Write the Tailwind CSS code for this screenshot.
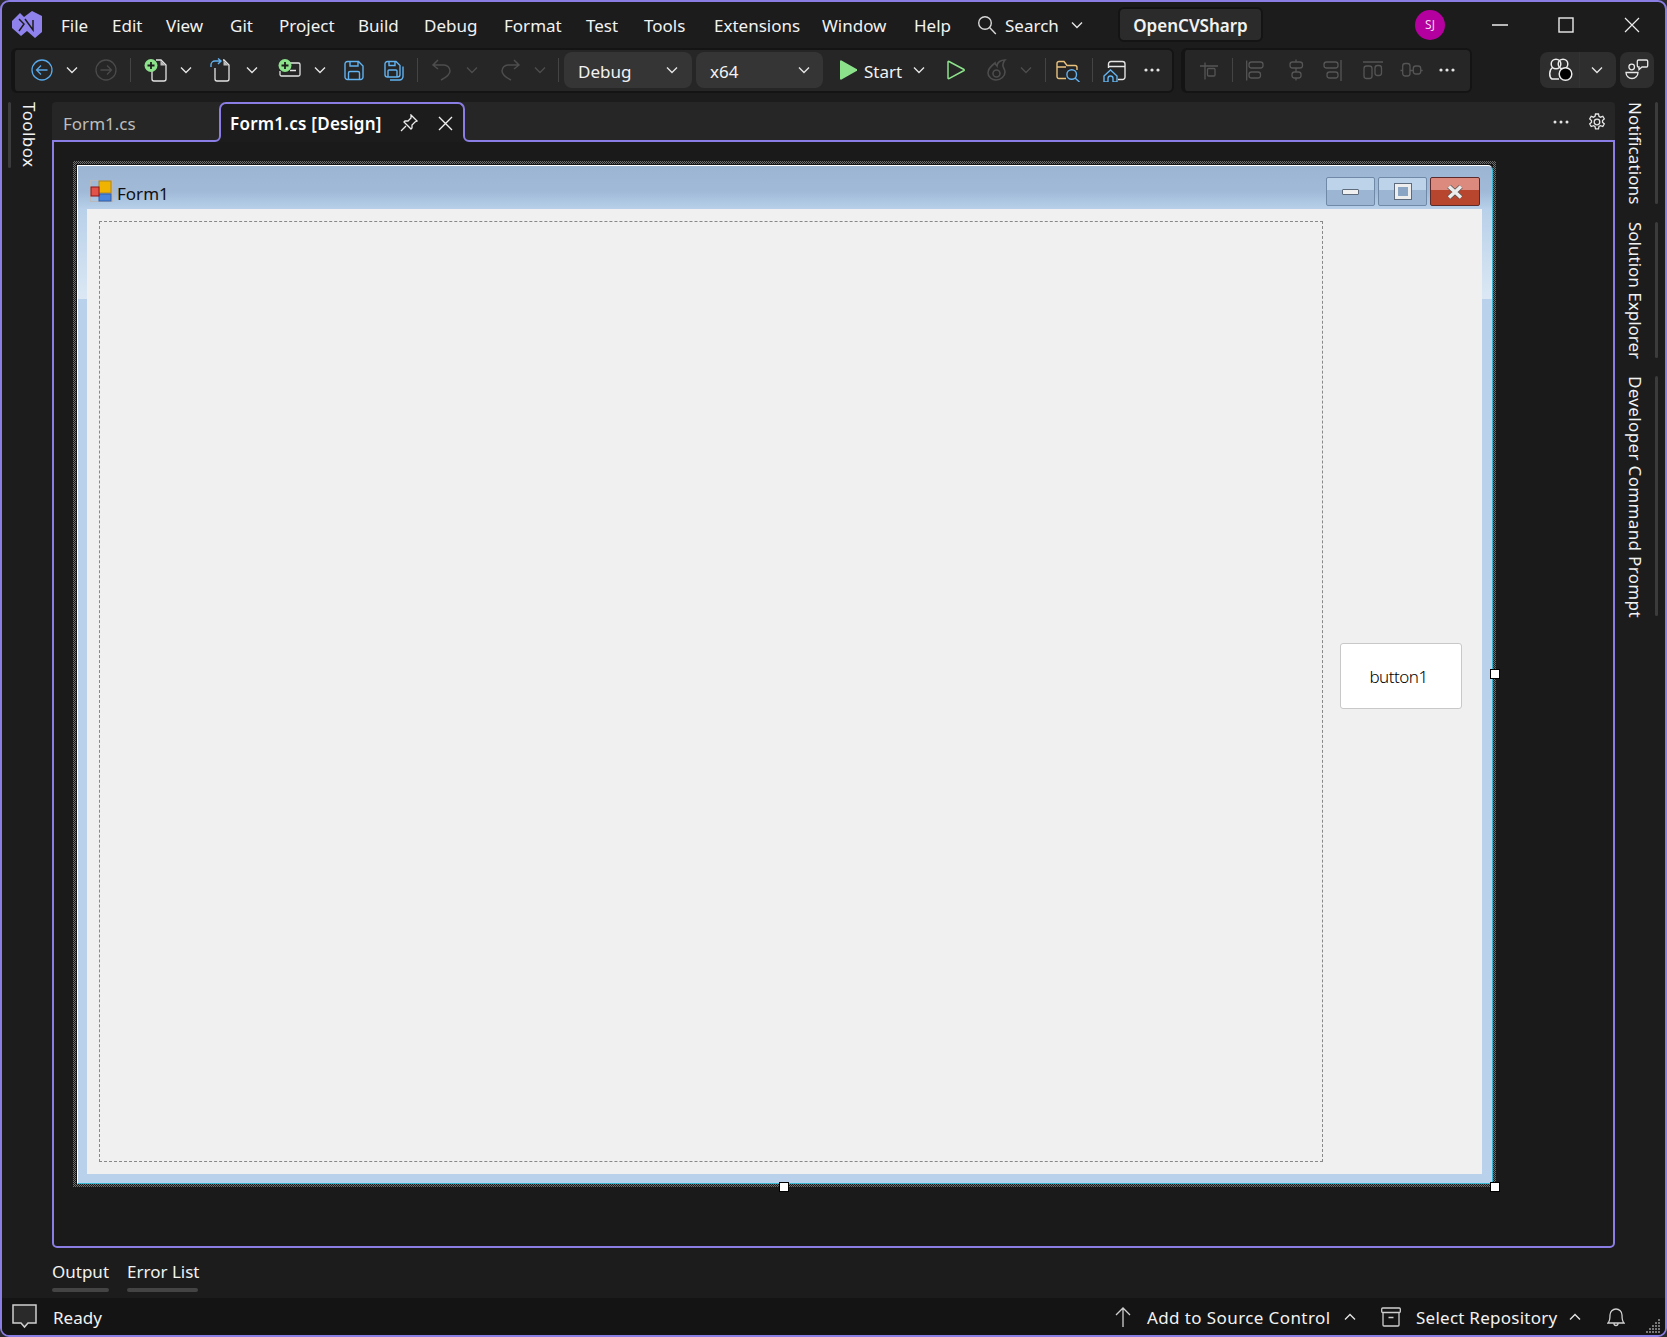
<!DOCTYPE html>
<html lang="en">
<head>
    <meta charset="UTF-8">
    <title>OpenCVSharp - Form1.cs [Design]</title>
    <script src="https://cdn.jsdelivr.net/npm/@tailwindcss/browser@4"></script>
</head>
<body class="bg-[#2a2a2a]">
<div class="w-[1667px] h-[1337px] flex flex-col border-2 border-[#8a7de3] rounded-[9px] overflow-hidden bg-[#1c1c1c] text-[#f2f2f2] text-[17px] leading-none whitespace-nowrap [font-family:'Noto_Sans',sans-serif]">

    <!-- menu bar -->
    <div class="h-[45px] shrink-0 flex items-center">
        <svg class="w-[30px] h-[27px] ml-[10px] shrink-0" viewBox="0 0 30 27">
            <path d="M0 10l8-8 4 4 8-6 10 5v16l-7 6-8-7-6 5-9-8z" fill="#8f82ec"/>
            <path d="M7 8l5 5-5 7M13 8l8 11V9" fill="none" stroke="#1c1c1c" stroke-width="1.500"/>
        </svg>
        <nav class="flex ml-[19px] pt-[2px]">
            <span class="w-[51px]">File</span>
            <span class="w-[54px]">Edit</span>
            <span class="w-[64px]">View</span>
            <span class="w-[49px]">Git</span>
            <span class="w-[79px]">Project</span>
            <span class="w-[66px]">Build</span>
            <span class="w-[80px]">Debug</span>
            <span class="w-[82px]">Format</span>
            <span class="w-[58px]">Test</span>
            <span class="w-[70px]">Tools</span>
            <span class="w-[108px]">Extensions</span>
            <span class="w-[92px]">Window</span>
            <span class="w-[63px]">Help</span>
        </nav>
        <svg class="w-[20px] h-[20px] shrink-0" viewBox="0 0 20 20" fill="none" stroke="#d8d8d8" stroke-width="1.4"><circle cx="8" cy="8" r="6.3"/><path d="M12.6 12.6l6.2 6.4"/></svg>
        <span class="ml-[8px] w-[66px] pt-[2px]">Search</span>
        <svg class="w-[12px] h-[12px] shrink-0" viewBox="0 0 12 12" fill="none" stroke="#e4e4e4" stroke-width="1.4"><path d="M1 3.5l5 5 5-5"/></svg>
        <div class="ml-[35px] w-[145px] h-[35px] pt-[2px] flex items-center justify-center rounded-md bg-[#2b2b2b] border-2 border-[#141414] font-semibold">OpenCVSharp</div>
        <div class="ml-[152px] w-[30px] h-[30px] rounded-full bg-[#b4009e] flex items-center justify-center text-[12px] text-[#f3d9ef]">SJ</div>
        <svg class="ml-[47px] w-[16px] h-[16px] shrink-0" viewBox="0 0 16 16" stroke="#ececec" stroke-width="1.4"><path d="M0 8h16"/></svg>
        <svg class="ml-[50px] w-[16px] h-[16px] shrink-0" viewBox="0 0 16 16" fill="none" stroke="#ececec" stroke-width="1.4"><rect x="1" y="1" width="14" height="14"/></svg>
        <svg class="ml-[50px] w-[16px] h-[16px] shrink-0" viewBox="0 0 16 16" stroke="#ececec" stroke-width="1.2"><path d="M1 1l14 14M15 1L1 15"/></svg>
    </div>

    <!-- toolbars -->
    <div class="h-[46px] shrink-0 flex items-center pl-[9px] pr-[11px]">
        <div class="w-[1163px] h-[45px] flex items-center pl-[15px] bg-[#262626] rounded-md border-2 border-l-4 border-[#141414]">
            <svg class="w-[24px] h-[24px] shrink-0" viewBox="0 0 24 24" fill="none" stroke="#58a9ea" stroke-width="1.3"><circle cx="12" cy="12" r="10"/><path d="M17.5 12h-11M11 7.5L6.5 12l4.5 4.5"/></svg>
            <svg class="ml-[12px] w-[12px] h-[12px] shrink-0" viewBox="0 0 12 12" fill="none" stroke="#e4e4e4" stroke-width="1.4"><path d="M1 3.5l5 5 5-5"/></svg>
            <svg class="ml-[16px] w-[24px] h-[24px] shrink-0" viewBox="0 0 24 24" fill="none" stroke="#4a4a4a" stroke-width="1.3"><circle cx="12" cy="12" r="10"/><path d="M6.5 12h11M13 7.5l4.5 4.5-4.5 4.5"/></svg>
            <div class="ml-[12px] w-px h-[24px] bg-[#444]"></div>
            <!-- new item -->
            <svg class="ml-[13px] w-[24px] h-[24px] shrink-0" viewBox="0 0 24 24" fill="none"><path d="M16.500 2.500v5h5z" fill="#bdbdbd"/><path d="M12 2h5l5 5v14a2 2 0 0 1-2 2H10a2 2 0 0 1-2-2v-8" stroke="#e4e4e4" stroke-width="1.300"/><circle cx="7" cy="7.500" r="6.500" fill="#8be28b"/><path d="M7 4v7M3.500 7.500h7" stroke="#1c1c1c" stroke-width="1.800"/></svg>
            <svg class="ml-[12px] w-[12px] h-[12px] shrink-0" viewBox="0 0 12 12" fill="none" stroke="#e4e4e4" stroke-width="1.4"><path d="M1 3.5l5 5 5-5"/></svg>
            <!-- open -->
            <svg class="ml-[16px] w-[24px] h-[24px] shrink-0" viewBox="0 0 24 24" fill="none"><path d="M15.500 2.500v5h5z" fill="#bdbdbd"/><path d="M15 2h1l5 5v14a2 2 0 0 1-2 2H9a2 2 0 0 1-2-2V10" stroke="#e4e4e4" stroke-width="1.300"/><path d="M3 9V7a4 4 0 0 1 4-4h6M10 .5L13 3l-3 3" stroke="#62b2f0" stroke-width="1.400"/></svg>
            <svg class="ml-[14px] w-[12px] h-[12px] shrink-0" viewBox="0 0 12 12" fill="none" stroke="#e4e4e4" stroke-width="1.4"><path d="M1 3.500l5 5 5-5"/></svg>
            <!-- add -->
            <svg class="ml-[19px] w-[24px] h-[24px] shrink-0" viewBox="0 0 24 24" fill="none"><path d="M13 5h8.500a1.500 1.500 0 0 1 1.500 1.500v10a1.500 1.500 0 0 1-1.500 1.500h-17A1.500 1.500 0 0 1 3 16.500V13M13 12.500h6" stroke="#e4e4e4" stroke-width="1.300"/><circle cx="8" cy="7.500" r="6.500" fill="#8be28b"/><path d="M8 4v7M4.500 7.500h7" stroke="#1c1c1c" stroke-width="1.800"/></svg>
            <svg class="ml-[13px] w-[12px] h-[12px] shrink-0" viewBox="0 0 12 12" fill="none" stroke="#e4e4e4" stroke-width="1.4"><path d="M1 3.500l5 5 5-5"/></svg>
            <!-- save -->
            <svg class="ml-[16px] w-[24px] h-[24px] shrink-0" viewBox="0 0 24 24" fill="none" stroke="#62b2f0" stroke-width="1.400"><path d="M5.500 3.500h11L21 8v11a2.500 2.500 0 0 1-2.500 2.500h-13A2.500 2.500 0 0 1 3 19V6a2.500 2.500 0 0 1 2.500-2.500zM8 3.500v4.500h8V3.500M6.500 21.500V15a1.500 1.500 0 0 1 1.500-1.500h8a1.500 1.500 0 0 1 1.500 1.500v6.500"/></svg>
            <!-- save all -->
            <svg class="ml-[16px] w-[24px] h-[24px] shrink-0" viewBox="0 0 24 24" fill="none" stroke="#62b2f0" stroke-width="1.400"><path d="M5.500 3.500h8.500l4 4v9a2.500 2.500 0 0 1-2.500 2.500h-10A2.500 2.500 0 0 1 3 16.500V6a2.500 2.500 0 0 1 2.500-2.500zM7 3.500v4h6v-4M6 19v-6a1 1 0 0 1 1-1h7a1 1 0 0 1 1 1v6M21 8.500v10a3.500 3.500 0 0 1-3.500 3.500H8"/></svg>
            <div class="ml-[11px] w-px h-[24px] bg-[#444]"></div>
            <svg class="ml-[12px] w-[24px] h-[24px] shrink-0" viewBox="0 0 24 24" fill="none" stroke="#4d4d4d" stroke-width="1.500"><path d="M8 2L3 7l5 4M3 7h11a6 6 0 0 1 6 6c0 4-5 7-9 9"/></svg>
            <svg class="ml-[12px] w-[12px] h-[12px] shrink-0" viewBox="0 0 12 12" fill="none" stroke="#4d4d4d" stroke-width="1.4"><path d="M1 3.500l5 5 5-5"/></svg>
            <svg class="ml-[20px] w-[24px] h-[24px] shrink-0" viewBox="0 0 24 24" fill="none" stroke="#4d4d4d" stroke-width="1.500"><path d="M16 2l5 5-5 4M21 7H10a6 6 0 0 0-6 6c0 4 5 7 9 9"/></svg>
            <svg class="ml-[12px] w-[12px] h-[12px] shrink-0" viewBox="0 0 12 12" fill="none" stroke="#4d4d4d" stroke-width="1.4"><path d="M1 3.500l5 5 5-5"/></svg>
            <div class="ml-[12px] w-px h-[24px] bg-[#444]"></div>

            <div class="ml-[5px] w-[128px] h-[36px] rounded-lg bg-[#353535] flex items-center pl-[14px] pr-[14px]">
                <span class="flex-1 pt-[2px]">Debug</span>
                <svg class="w-[12px] h-[12px] shrink-0" viewBox="0 0 12 12" fill="none" stroke="#e4e4e4" stroke-width="1.4"><path d="M1 3.500l5 5 5-5"/></svg>
            </div>
            <div class="ml-[4px] w-[127px] h-[36px] rounded-lg bg-[#353535] flex items-center pl-[14px] pr-[13px]">
                <span class="flex-1 pt-[2px]">x64</span>
                <svg class="w-[12px] h-[12px] shrink-0" viewBox="0 0 12 12" fill="none" stroke="#e4e4e4" stroke-width="1.4"><path d="M1 3.500l5 5 5-5"/></svg>
            </div>

            <svg class="ml-[17px] w-[17px] h-[20px] shrink-0" viewBox="0 0 17 20" fill="#8be28b"><path d="M1.500 0.500L16.500 9a1 1 0 0 1 0 2L1.500 19.500A1 1 0 0 1 0 18.500V1.500a1 1 0 0 1 1.500-1z"/></svg>
            <span class="ml-[7px] w-[48px] pt-[2px]">Start</span>
            <svg class="ml-[1px] w-[12px] h-[12px] shrink-0" viewBox="0 0 12 12" fill="none" stroke="#e4e4e4" stroke-width="1.4"><path d="M1 3.500l5 5 5-5"/></svg>
            <svg class="ml-[19px] w-[24px] h-[24px] shrink-0" viewBox="0 0 24 24" fill="none" stroke="#8be28b" stroke-width="1.500"><path d="M5 3.500l15 8a.6.6 0 0 1 0 1l-15 8a.600.600 0 0 1-1-.5V4a.600.600 0 0 1 1-.5z"/></svg>
            <svg class="ml-[17px] w-[24px] h-[24px] shrink-0" viewBox="0 0 24 24" fill="none" stroke="#4d4d4d" stroke-width="1.600"><path d="M20 2c-4 0-8 2-8 6-1-1-2-2-2-3-4 3-7 6-7 10 0 4 4 7 8 7 5 0 9-4 9-8 0-3-3-5-2-8 .5-2 1-3 2-4z"/><circle cx="11.500" cy="15.500" r="3.500"/></svg>
            <svg class="ml-[11px] w-[12px] h-[12px] shrink-0" viewBox="0 0 12 12" fill="none" stroke="#4d4d4d" stroke-width="1.4"><path d="M1 3.500l5 5 5-5"/></svg>
            <div class="ml-[13px] w-px h-[24px] bg-[#444]"></div>
            <!-- folder search -->
            <svg class="ml-[10px] w-[24px] h-[24px] shrink-0" viewBox="0 0 24 24" fill="none" stroke-width="1.400"><path d="M10 20.500H3A2 2 0 0 1 1 18.500V5.500A2 2 0 0 1 3 3.500h5l3 4h8a2 2 0 0 1 2 2V12M1 9h9" stroke="#e9c27e"/><circle cx="15.700" cy="16.500" r="4.800" stroke="#62b2f0"/><path d="M19 20l4.500 4" stroke="#62b2f0"/></svg>
            <div class="ml-[12px] w-px h-[24px] bg-[#444]"></div>
            <!-- remote window -->
            <svg class="ml-[10px] w-[24px] h-[24px] shrink-0" viewBox="0 0 24 24" fill="none" stroke-width="1.400"><path d="M5.500 10V6A2.500 2.500 0 0 1 8 3.500h11.500A2.500 2.500 0 0 1 22 6v13a2.500 2.500 0 0 1-2.500 2.500H15M5.500 8.500H22" stroke="#e4e4e4"/><path d="M1 18l6.500-6 6.500 6v6h-4v-3.500a2.500 2.500 0 0 0-5 0V24H1z" stroke="#62b2f0"/></svg>
            <svg class="ml-[13px] w-[24px] h-[24px] shrink-0" viewBox="0 0 24 24" fill="#e4e4e4"><circle cx="6" cy="12" r="1.600"/><circle cx="12" cy="12" r="1.600"/><circle cx="18" cy="12" r="1.600"/></svg>
        </div>

        <div class="ml-[7px] w-[291px] h-[45px] flex items-center pl-[12px] bg-[#262626] rounded-md border-2 border-l-4 border-[#141414]">
            <svg class="w-[24px] h-[24px] shrink-0" viewBox="0 0 24 24" fill="none" stroke="#555" stroke-width="1.300"><path d="M3 8h18M8 4.500v17"/><rect x="10.500" y="10.500" width="7.500" height="7.500" rx="1"/></svg>
            <div class="ml-[11px] w-px h-[24px] bg-[#444]"></div>
            <svg class="ml-[10px] w-[24px] h-[24px] shrink-0" viewBox="0 0 24 24" fill="none" stroke="#555" stroke-width="1.300"><path d="M3.700 2.500v20"/><rect x="6" y="4" width="14" height="6" rx="2.500"/><rect x="6" y="14" width="11.500" height="6" rx="2.500"/></svg>
            <svg class="ml-[17px] w-[24px] h-[24px] shrink-0" viewBox="0 0 24 24" fill="none" stroke="#555" stroke-width="1.300"><path d="M12 1.500V4M12 10v4M12 20v2.500"/><rect x="6" y="4" width="12.500" height="6" rx="2.500"/><rect x="8" y="14" width="9" height="6" rx="2.500"/></svg>
            <svg class="ml-[13px] w-[24px] h-[24px] shrink-0" viewBox="0 0 24 24" fill="none" stroke="#555" stroke-width="1.300"><path d="M20 2v21"/><rect x="3" y="4" width="14" height="6" rx="2.500"/><rect x="6" y="14" width="11" height="6" rx="2.500"/></svg>
            <svg class="ml-[16px] w-[24px] h-[24px] shrink-0" viewBox="0 0 24 24" fill="none" stroke="#555" stroke-width="1.300"><path d="M2 4h20"/><rect x="3" y="8" width="8" height="12.500" rx="2.500"/><rect x="14" y="7.500" width="6.500" height="10" rx="2.500"/></svg>
            <svg class="ml-[14px] w-[24px] h-[24px] shrink-0" viewBox="0 0 24 24" fill="none" stroke="#555" stroke-width="1.300"><path d="M1.500 12.500h2M11 12.500h3.300M21.700 12.500h2"/><rect x="3.700" y="5.500" width="7.300" height="12.500" rx="2.500"/><rect x="14.300" y="8" width="7.400" height="8" rx="2.500"/></svg>
            <svg class="ml-[12px] w-[24px] h-[24px] shrink-0" viewBox="0 0 24 24" fill="#e4e4e4"><circle cx="6" cy="12" r="1.600"/><circle cx="12" cy="12" r="1.600"/><circle cx="18" cy="12" r="1.600"/></svg>
        </div>

        <div class="ml-auto w-[76px] h-[36px] rounded-lg bg-[#2e2e2e] flex items-center">
            <svg class="ml-[8px] w-[26px] h-[26px] shrink-0" viewBox="0 0 26 26" fill="none" stroke="#ececec" stroke-width="1.500"><circle cx="8" cy="7" r="4.800"/><circle cx="15" cy="7" r="4.800"/><path d="M4.500 10.500C1 13 .8 20 4 22h7"/><circle cx="17.500" cy="17" r="6.300" fill="#000"/></svg>
            <div class="ml-[5px] w-px h-full bg-[#333]"></div>
            <svg class="ml-[11px] w-[12px] h-[12px] shrink-0" viewBox="0 0 12 12" fill="none" stroke="#e4e4e4" stroke-width="1.4"><path d="M1 3.500l5 5 5-5"/></svg>
        </div>
        <div class="ml-[4px] w-[34px] h-[36px] rounded-lg bg-[#2e2e2e] flex items-center justify-center">
            <svg class="w-[24px] h-[24px] shrink-0" viewBox="0 0 24 24" fill="none" stroke="#e8e8e8" stroke-width="1.300"><circle cx="6.700" cy="9" r="2.800"/><path d="M1 14.500h12a6 6 0 0 1-12 0z"/><path d="M13.500 2h8a1.200 1.200 0 0 1 1.200 1.200v4.600A1.200 1.200 0 0 1 21.500 9h-4.500l-3 2.500V9h-.5a1.200 1.200 0 0 1-1.200-1.200V3.200A1.200 1.200 0 0 1 13.500 2z"/></svg>
        </div>
    </div>

    <!-- main row -->
    <div class="h-[1146px] mt-[9px] shrink-0 flex">
        <!-- left rail -->
        <div class="w-[50px] shrink-0 flex pl-[6px] gap-[10px]">
            <div class="w-[3px] h-[66px] bg-[#3c3c3c] rounded-full"></div>
            <span class="[writing-mode:vertical-rl] h-[66px] tracking-[0.4px]">Toolbox</span>
        </div>

        <!-- document -->
        <div class="w-[1563px] shrink-0 flex flex-col">
            <div class="h-[38px] shrink-0 flex bg-[#262626] rounded-t-sm">
                <div class="w-[167px] h-[38px] flex items-center pl-[11px] pt-[4px] text-[#bdbdbd]">Form1.cs</div>
                <div class="relative z-10 w-[246px] h-[40px] flex items-center pl-[9px] bg-[#1c1c1c] border-2 border-b-0 border-[#8a7de3] rounded-t-[7px]">
                    <span class="w-[170px] font-semibold text-white tracking-[0.25px]">Form1.cs [Design]</span>
                    <svg class="w-[18px] h-[18px] shrink-0" viewBox="0 0 18 18" fill="none" stroke="#ececec" stroke-width="1.300"><path d="M11 1l6 6-2 1-3 3v3l-1 1-7-7 1-1h3l3-3zM6 12l-5 5"/></svg>
                    <svg class="ml-[20px] w-[15px] h-[15px] shrink-0" viewBox="0 0 15 15" stroke="#f0f0f0" stroke-width="1.400"><path d="M1 1l13 13M14 1L1 14"/></svg>
                    <!-- flared joins into the document border -->
                    <svg class="absolute bottom-0 left-[-6px] w-[6px] h-[6px]" viewBox="0 0 6 6"><path d="M6 0H5A5 5 0 0 1 0 5V6H6z" fill="#1c1c1c"/><path d="M5 0A5 5 0 0 1 0 5" fill="none" stroke="#8a7de3" stroke-width="2"/></svg>
                    <svg class="absolute bottom-0 right-[-6px] w-[6px] h-[6px]" viewBox="0 0 6 6"><path d="M0 0H1A5 5 0 0 0 6 5V6H0z" fill="#1c1c1c"/><path d="M1 0A5 5 0 0 0 6 5" fill="none" stroke="#8a7de3" stroke-width="2"/></svg>
                </div>
                <div class="ml-auto flex items-center pr-[9px] pt-[2px]">
                    <svg class="w-[24px] h-[24px] shrink-0" viewBox="0 0 24 24" fill="#e4e4e4"><circle cx="6" cy="12" r="1.500"/><circle cx="12" cy="12" r="1.500"/><circle cx="18" cy="12" r="1.500"/></svg>
                    <svg class="ml-[15px] w-[18px] h-[18px] shrink-0" viewBox="0 0 18 18" fill="none" stroke="#e4e4e4" stroke-width="1.300"><circle cx="9" cy="9" r="2.800"/><path d="M7.500 1h3l.5 2.400 1.500.8 2.300-.9 1.500 2.600-1.800 1.600v1.800l1.800 1.600-1.500 2.600-2.300-.9-1.500.8-.5 2.400h-3l-.5-2.400-1.500-.8-2.300.9-1.500-2.600 1.800-1.600V7.500L1.700 5.900l1.500-2.600 2.300.9 1.500-.8z"/></svg>
                </div>
            </div>

            <div class="flex-1 border-2 border-[#8a7de3] rounded-b-[5px] bg-[#1a1a1a] pl-[19px] pt-[19px]">
                <!-- designer selection frame -->
                <div class="relative w-[1423px] h-[1026px] p-[3px] bg-[repeating-conic-gradient(#6e6e6e_0_25%,#1a1a1a_0_50%)] bg-[length:2px_2px]">
                    <div class="w-full h-full bg-[#141414] pl-px pt-px">
                        <!-- form -->
                        <div class="w-full h-full flex flex-col border-t border-l border-white border-r border-b border-r-[#39b5cf] border-b-[#39b5cf] rounded-tr-[5px] bg-[linear-gradient(#9bb5d3_0px,#a0bad8_26px,#b8d0e9_43px,#dce8f4_133px,#b9d1ea_133px)]">
                            <div class="h-[43px] shrink-0 flex items-start justify-between pl-[12px] pr-[12px]">
                                <div class="flex items-center h-[36px] pt-[14px] text-[#111]">
                                    <svg class="w-[23px] h-[22px] shrink-0" viewBox="0 0 23 22">
                                        <rect x=".5" y=".5" width="22" height="21" fill="none" stroke="#b9b9b9"/>
                                        <rect x="9" y="1" width="12" height="12" fill="#f0b400" stroke="#a8862e"/>
                                        <rect x="9" y="14" width="12" height="7" fill="#4a85dd" stroke="#2f5ea8"/>
                                        <rect x="1" y="7" width="8" height="9" fill="#e0524a" stroke="#8e1414"/>
                                    </svg>
                                    <span class="ml-[4px] pt-[4px]">Form1</span>
                                </div>
                                <div class="flex gap-[3px] pt-[11px]">
                                    <div class="w-[49px] h-[29px] flex items-center justify-center border border-[#6f89a7] rounded-[2px] bg-[linear-gradient(#bdd3ea_0,#bdd3ea_45%,#9bb5d2_45%,#9bb5d2_100%)]">
                                        <div class="w-[17px] h-[6px] bg-[#f0f0f0] border border-[#5d6b7c] rounded-[1px]"></div>
                                    </div>
                                    <div class="w-[49px] h-[29px] flex items-center justify-center border border-[#6f89a7] rounded-[2px] bg-[linear-gradient(#bdd3ea_0,#bdd3ea_45%,#9bb5d2_45%,#9bb5d2_100%)]">
                                        <div class="w-[16px] h-[15px] bg-[#8aa6c4] border-[3px] border-[#eeeeee] outline outline-1 outline-[#5d6b7c]"></div>
                                    </div>
                                    <div class="w-[50px] h-[29px] flex items-center justify-center border border-[#5c2a2a] rounded-[2px] bg-[linear-gradient(#dc8a7d_0,#dc8a7d_45%,#b8452d_45%,#b8452d_100%)]">
                                        <svg class="w-[18px] h-[16px]" viewBox="0 0 18 16"><path d="M3 2.500l12 11M15 2.500l-12 11" stroke="#555" stroke-width="5"/><path d="M3 2.500l12 11M15 2.500l-12 11" stroke="#ececec" stroke-width="3.500"/></svg>
                                    </div>
                                </div>
                            </div>
                            <div class="w-[1395px] h-[965px] ml-[9px] flex bg-[#f0f0f0] pl-[12px] pt-[12px]">
                                <div class="w-[1224px] h-[941px] border border-dashed border-[#888]"></div>
                                <button class="ml-[17px] mt-[422px] w-[122px] h-[66px] bg-white border border-[#c8c8c8] rounded-[3px] text-black font-light text-[17px] tracking-[-0.5px] pr-[5px]">button1</button>
                            </div>
                        </div>
                    </div>
                    <!-- selection handles -->
                    <div class="absolute top-[508px] right-[-4px] w-[10px] h-[10px] bg-white border border-black"></div>
                    <div class="absolute bottom-[-5px] left-[706px] w-[10px] h-[10px] bg-white border border-black"></div>
                    <div class="absolute bottom-[-5px] right-[-4px] w-[10px] h-[10px] bg-white border border-black"></div>
                </div>
            </div>
        </div>

        <!-- right rail -->
        <div class="w-[50px] shrink-0 flex flex-col gap-[18px]">
            <div class="h-[102px] flex gap-[11px] pl-[12px]"><span class="w-[17px] [writing-mode:vertical-rl] tracking-[0.1px]">Notifications</span><div class="w-[3px] h-full bg-[#3c3c3c] rounded-full"></div></div>
            <div class="h-[136px] flex gap-[11px] pl-[12px]"><span class="w-[17px] [writing-mode:vertical-rl]">Solution Explorer</span><div class="w-[3px] h-full bg-[#3c3c3c] rounded-full"></div></div>
            <div class="h-[240px] flex gap-[11px] pl-[12px]"><span class="w-[17px] [writing-mode:vertical-rl] tracking-[0.35px]">Developer Command Prompt</span><div class="w-[3px] h-full bg-[#3c3c3c] rounded-full"></div></div>
        </div>
    </div>

    <!-- output tabs -->
    <div class="h-[50px] shrink-0 flex pl-[50px] gap-[18px] pt-[15px]">
        <div class="w-[57px] flex flex-col gap-[7px]"><span class="h-[18px]">Output</span><div class="h-[4px] rounded-full bg-[#444]"></div></div>
        <div class="w-[71px] flex flex-col gap-[7px]"><span class="h-[18px]">Error List</span><div class="h-[4px] rounded-full bg-[#444]"></div></div>
    </div>

    <!-- status bar -->
    <div class="flex-1 flex items-center bg-[#141414] pl-[10px]">
        <svg class="w-[25px] h-[25px] shrink-0" viewBox="0 0 25 25" fill="#2a2a2a" stroke="#cfcfcf" stroke-width="1.500"><path d="M1 1h23v18h-8l-3.500 4-3.500-4H1z"/></svg>
        <span class="ml-[16px] pt-[2px]">Ready</span>
        <svg class="ml-auto w-[16px] h-[20px] shrink-0" viewBox="0 0 16 20" fill="none" stroke="#cfcfcf" stroke-width="1.300"><path d="M8 20V1M1 8l7-7 7 7"/></svg>
        <span class="ml-[16px] w-[197px] pt-[2px] tracking-[0.4px]">Add to Source Control</span>
        <svg class="w-[12px] h-[12px] shrink-0" viewBox="0 0 12 12" fill="none" stroke="#e4e4e4" stroke-width="1.4"><path d="M1 8.500l5-5 5 5"/></svg>
        <svg class="ml-[25px] w-[20px] h-[20px] shrink-0" viewBox="0 0 20 20" fill="none" stroke="#cfcfcf" stroke-width="1.300"><rect x=".7" y="1" width="18.600" height="4.500" rx="1"/><path d="M2 5.500V18a1 1 0 0 0 1 1h14a1 1 0 0 0 1-1V5.500M7.500 10.500h5"/></svg>
        <span class="ml-[15px] w-[153px] pt-[2px] tracking-[0.25px]">Select Repository</span>
        <svg class="w-[12px] h-[12px] shrink-0" viewBox="0 0 12 12" fill="none" stroke="#e4e4e4" stroke-width="1.4"><path d="M1 8.500l5-5 5 5"/></svg>
        <svg class="ml-[26px] w-[18px] h-[20px] shrink-0" viewBox="0 0 18 20" fill="none" stroke="#cfcfcf" stroke-width="1.300"><path d="M1 16c2-2 2-4 2-8a6 6 0 0 1 12 0c0 4 0 6 2 8zM7 16.500a2 2 0 0 0 4 0"/></svg>
        <svg class="ml-[21px] mr-[5px] w-[14px] h-[14px] shrink-0 self-end mb-[2px]" viewBox="0 0 14 14" fill="#777"><path d="M12 0h2v2h-2zM9 3h2v2H9zM12 3h2v2h-2zM6 6h2v2H6zM9 6h2v2H9zM12 6h2v2h-2zM3 9h2v2H3zM6 9h2v2H6zM9 9h2v2H9zM12 9h2v2h-2zM0 12h2v2H0zM3 12h2v2H3zM6 12h2v2H6zM9 12h2v2H9zM12 12h2v2h-2z"/></svg>
    </div>
</div>
</body>
</html>
